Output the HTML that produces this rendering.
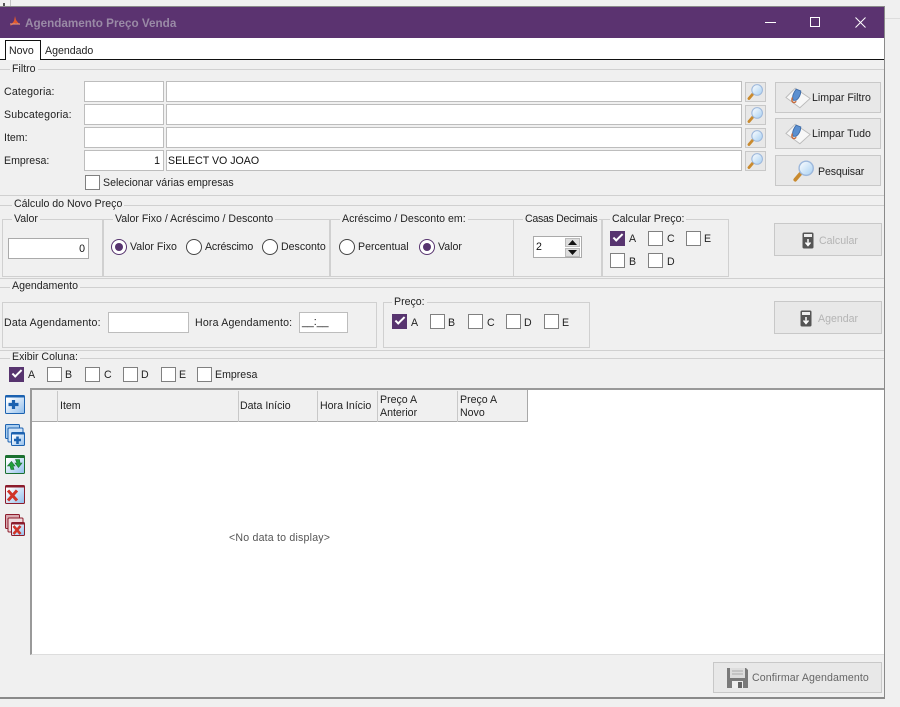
<!DOCTYPE html>
<html lang="pt"><head><meta charset="utf-8"><title>Agendamento Preço Venda</title>
<style>
html,body{margin:0;padding:0;width:900px;height:707px;overflow:hidden;background:#f0f0f0}
body{position:relative;font:10.6px "Liberation Sans",Arial,sans-serif;color:#222}
div,span,svg{position:absolute;box-sizing:border-box}
.t{white-space:nowrap;line-height:13px;margin-top:1px}
.g{background:#f0f0f0;padding:0 2px}
.i{background:#fff;border:1px solid #bdbdbd;line-height:20px;padding:0 3px;color:#111;white-space:nowrap}
.bx{border:1px solid #d0d0d0}
.hl{height:1px;background:#d0d0d0}
.b{background:#e8e8e8;border:1px solid #c8c8c8}
.c{width:15px;height:15px;background:#fff;border:1px solid #808080}
.c.on{background:#57346f;border-color:#57346f}
.c.on:after{content:"";position:absolute;left:2px;top:2px;width:8px;height:3px;border-left:2px solid #fff;border-bottom:2px solid #fff;transform:rotate(-45deg)}
.r{width:16px;height:16px;border-radius:50%;background:#fff;border:1px solid #444}
.r.on{border-color:#57346f}
.r.on:after{content:"";position:absolute;left:3px;top:3px;width:8px;height:8px;border-radius:50%;background:#57346f}
.h{top:1px;height:31px;border-right:1px solid #c8c8c8}
.h .t{left:3px}
.w{letter-spacing:.18px}
</style></head><body>
<svg width="0" height="0" style="left:0;top:0"><defs>
<linearGradient id="gl" x1="0" y1="0" x2="1" y2="1"><stop offset="0" stop-color="#fff"/><stop offset="1" stop-color="#a6cff2"/></linearGradient>
<symbol id="mag" viewBox="0 0 22 22"><path d="M3 19 9 12" stroke="#c98a2e" stroke-width="3.400" stroke-linecap="round"/><circle cx="13" cy="8.500" r="6.500" fill="url(#gl)" stroke="#9db8dc" stroke-width="1.300"/></symbol>
<symbol id="era" viewBox="0 0 28 24"><path d="M1 12 11 2 27 13 16 23Z" fill="#f7f7f7" stroke="#bbb"/><path d="M9 15C7 12 9 7 12 3L17 5C17 9 15 13 12 15Z" fill="#5b8fd0" stroke="#3f6ca8"/><path d="M8 12C6 17 10 19 12 16" fill="none" stroke="#c4693a" stroke-width="1.500"/></symbol>
<symbol id="usb" viewBox="0 0 12 17"><rect x="0.500" y="0.500" width="11" height="16" rx="1.500" fill="#555"/><rect x="2" y="2" width="8" height="3" fill="#eee"/><path d="M6 7V13M3.500 10.500 6 13.500 8.500 10.500" stroke="#fff" stroke-width="1.500" fill="none"/></symbol>
</defs></svg>

<!-- background hints -->
<div style="left:3px;top:3px;width:2px;height:3px;background:#555"></div>
<div style="left:10px;top:0;width:1px;height:6px;background:#c4c4c4"></div>
<div style="left:885px;top:18px;width:15px;height:1px;background:#ddd"></div>

<!-- window -->
<div style="left:0;top:6px;width:885px;height:693px;background:#f0f0f0;border:solid #8a8a8a;border-width:1px 1px 2px 0"></div>
<div style="left:0;top:7px;width:884px;height:31px;background:#5b3370"></div>
<svg style="left:9px;top:16px" width="12" height="11" viewBox="0 0 12 11"><path d="M6 0 7 4 11 9 7 7 1 10 5 5Z" fill="#e2592c"/><path d="M1 8H11" stroke="#f0a080" stroke-width="1"/></svg>
<div class="t" style="left:25px;top:16px;font-weight:bold;color:#9a8aa6;font-size:11.700px">Agendamento Preço Venda</div>
<div style="left:765px;top:22px;width:11px;height:1px;background:#fff"></div>
<div style="left:810px;top:17px;width:10px;height:10px;border:1px solid #fff"></div>
<svg style="left:855px;top:17px" width="11" height="11"><path d="M.5.500 10.500 10.500M10.500.500.500 10.500" stroke="#fff" fill="none"/></svg>

<!-- tabs -->
<div style="left:0;top:38px;width:884px;height:21px;background:#fff"></div>
<div style="left:0;top:59px;width:884px;height:1px;background:#111"></div>
<div style="left:5px;top:40px;width:36px;height:20px;background:#fff;border:1px solid #111;border-bottom:0"></div>
<div class="t" style="left:9px;top:44px">Novo</div>
<div class="t" style="left:45px;top:44px">Agendado</div>

<!-- Filtro -->
<div class="bx" style="left:0;top:69px;width:884px;height:127px;border-left:0;border-right:0"></div>
<div class="t g" style="left:10px;top:62px">Filtro</div>
<div class="t w" style="left:4px;top:85px">Categoria:</div>
<div class="t w" style="left:4px;top:108px">Subcategoria:</div>
<div class="t" style="left:4px;top:131px">Item:</div>
<div class="t" style="left:4px;top:154px">Empresa:</div>
<div class="i" style="left:84px;top:81px;width:80px;height:21px"></div>
<div class="i" style="left:166px;top:81px;width:576px;height:21px"></div>
<div class="i" style="left:84px;top:104px;width:80px;height:21px"></div>
<div class="i" style="left:166px;top:104px;width:576px;height:21px"></div>
<div class="i" style="left:84px;top:127px;width:80px;height:21px"></div>
<div class="i" style="left:166px;top:127px;width:576px;height:21px"></div>
<div class="i" style="left:84px;top:150px;width:80px;height:21px;text-align:right">1</div>
<div class="i" style="left:166px;top:150px;width:576px;height:21px;padding-left:1px">SELECT VO JOAO</div>
<div class="b" style="left:745px;top:82px;width:21px;height:20px"><svg style="left:0;top:0" width="19" height="18"><use href="#mag"/></svg></div>
<div class="b" style="left:745px;top:105px;width:21px;height:20px"><svg style="left:0;top:0" width="19" height="18"><use href="#mag"/></svg></div>
<div class="b" style="left:745px;top:128px;width:21px;height:20px"><svg style="left:0;top:0" width="19" height="18"><use href="#mag"/></svg></div>
<div class="b" style="left:745px;top:151px;width:21px;height:20px"><svg style="left:0;top:0" width="19" height="18"><use href="#mag"/></svg></div>
<div class="c" style="left:85px;top:175px"></div>
<div class="t" style="left:103px;top:176px">Selecionar várias empresas</div>
<div class="b" style="left:775px;top:82px;width:106px;height:31px"><svg style="left:9px;top:3px" width="26" height="23"><use href="#era"/></svg><div class="t" style="left:36px;top:8px">Limpar Filtro</div></div>
<div class="b" style="left:775px;top:118px;width:106px;height:31px"><svg style="left:9px;top:3px" width="26" height="23"><use href="#era"/></svg><div class="t" style="left:36px;top:8px">Limpar Tudo</div></div>
<div class="b" style="left:775px;top:155px;width:106px;height:31px"><svg style="left:16px;top:3px" width="24" height="24"><use href="#mag"/></svg><div class="t" style="left:42px;top:9px;letter-spacing:-.1px">Pesquisar</div></div>

<!-- Cálculo -->
<div class="bx" style="left:0;top:205px;width:884px;height:74px;border-left:0;border-right:0"></div>
<div class="t g" style="left:12px;top:197px">Cálculo do Novo Preço</div>
<div class="bx" style="left:2px;top:219px;width:101px;height:58px"></div>
<div class="t g" style="left:12px;top:212px">Valor</div>
<div class="i" style="left:8px;top:238px;width:81px;height:21px;text-align:right;border-color:#aaa">0</div>
<div class="bx" style="left:103px;top:219px;width:227px;height:58px"></div>
<div class="t g" style="left:113px;top:212px">Valor Fixo / Acréscimo / Desconto</div>
<div class="r on" style="left:111px;top:239px"></div>
<div class="t" style="left:130px;top:240px">Valor Fixo</div>
<div class="r" style="left:186px;top:239px"></div>
<div class="t" style="left:205px;top:240px;letter-spacing:-.15px">Acréscimo</div>
<div class="r" style="left:262px;top:239px"></div>
<div class="t" style="left:281px;top:240px">Desconto</div>
<div class="bx" style="left:330px;top:219px;width:184px;height:58px"></div>
<div class="t g" style="left:340px;top:212px">Acréscimo / Desconto em:</div>
<div class="r" style="left:339px;top:239px"></div>
<div class="t" style="left:358px;top:240px">Percentual</div>
<div class="r on" style="left:419px;top:239px"></div>
<div class="t" style="left:438px;top:240px">Valor</div>
<div class="bx" style="left:513px;top:219px;width:89px;height:58px"></div>
<div class="t g" style="left:523px;top:212px;letter-spacing:-.3px">Casas Decimais</div>
<div class="i" style="left:533px;top:236px;width:49px;height:22px;padding-left:2px;border-color:#aaa">2</div>
<div style="left:565px;top:238px;width:15px;height:9px;background:#ddd;border:1px solid #bbb"></div>
<div style="left:565px;top:248px;width:15px;height:9px;background:#ddd;border:1px solid #bbb"></div>
<svg style="left:565px;top:238px" width="15" height="19"><path d="M7.500 2 12 7H3ZM7.500 17 3 12H12Z" fill="#111"/></svg>
<div class="bx" style="left:602px;top:219px;width:127px;height:58px"></div>
<div class="t g" style="left:610px;top:212px">Calcular Preço:</div>
<div class="c on" style="left:610px;top:231px"></div><div class="t" style="left:629px;top:232px">A</div>
<div class="c" style="left:648px;top:231px"></div><div class="t" style="left:667px;top:232px">C</div>
<div class="c" style="left:686px;top:231px"></div><div class="t" style="left:704px;top:232px">E</div>
<div class="c" style="left:610px;top:253px"></div><div class="t" style="left:629px;top:255px">B</div>
<div class="c" style="left:648px;top:253px"></div><div class="t" style="left:667px;top:255px">D</div>
<div class="b" style="left:774px;top:223px;width:108px;height:33px"><svg style="left:27px;top:8px" width="12" height="17"><use href="#usb"/></svg><div class="t" style="left:44px;top:10px;color:#b4b4b4">Calcular</div></div>

<!-- Agendamento -->
<div class="bx" style="left:0;top:287px;width:884px;height:64px;border-left:0;border-right:0"></div>
<div class="t g" style="left:10px;top:279px">Agendamento</div>
<div class="bx" style="left:2px;top:302px;width:375px;height:46px"></div>
<div class="t w" style="left:4px;top:316px">Data Agendamento:</div>
<div class="i" style="left:108px;top:312px;width:81px;height:21px"></div>
<div class="t w" style="left:195px;top:316px">Hora Agendamento:</div>
<div class="i" style="left:299px;top:312px;width:49px;height:21px;line-height:18px;padding-left:2px;color:#111">__:__</div>
<div class="bx" style="left:383px;top:302px;width:207px;height:46px"></div>
<div class="t g" style="left:392px;top:295px">Preço:</div>
<div class="c on" style="left:392px;top:314px"></div><div class="t" style="left:411px;top:316px">A</div>
<div class="c" style="left:430px;top:314px"></div><div class="t" style="left:448px;top:316px">B</div>
<div class="c" style="left:468px;top:314px"></div><div class="t" style="left:487px;top:316px">C</div>
<div class="c" style="left:506px;top:314px"></div><div class="t" style="left:524px;top:316px">D</div>
<div class="c" style="left:544px;top:314px"></div><div class="t" style="left:562px;top:316px">E</div>
<div class="b" style="left:774px;top:301px;width:108px;height:33px"><svg style="left:25px;top:8px" width="12" height="17"><use href="#usb"/></svg><div class="t" style="left:43px;top:10px;color:#b4b4b4">Agendar</div></div>

<!-- Exibir Coluna -->
<div class="hl" style="left:0;top:358px;width:884px"></div>
<div class="t g" style="left:10px;top:350px">Exibir Coluna:</div>
<div class="c on" style="left:9px;top:367px"></div><div class="t" style="left:28px;top:368px">A</div>
<div class="c" style="left:47px;top:367px"></div><div class="t" style="left:65px;top:368px">B</div>
<div class="c" style="left:85px;top:367px"></div><div class="t" style="left:104px;top:368px">C</div>
<div class="c" style="left:123px;top:367px"></div><div class="t" style="left:141px;top:368px">D</div>
<div class="c" style="left:161px;top:367px"></div><div class="t" style="left:179px;top:368px">E</div>
<div class="c" style="left:197px;top:367px"></div><div class="t" style="left:215px;top:368px">Empresa</div>

<!-- side icons -->
<svg style="left:5px;top:395px" width="21" height="145" viewBox="0 0 21 145">
<defs><linearGradient id="w" x1="0" y1="0" x2="1" y2="1"><stop offset=".15" stop-color="#fff"/><stop offset="1" stop-color="#8fbdec"/></linearGradient></defs>
<rect x=".5" y=".5" width="19" height="18" rx="1" fill="url(#w)" stroke="#1c62b0"/><rect x=".5" y=".5" width="19" height="2" fill="#1c62b0"/><path d="M3.500 9.500H13.500M8.500 5V14" stroke="#1c62b0" stroke-width="3.200"/>
<rect x=".5" y="29.500" width="14" height="14" rx="1" fill="#a8cdf0" stroke="#1c62b0"/><rect x="3" y="33" width="15" height="14" rx="1" fill="#cfe3f7" stroke="#1c62b0"/><rect x="6.500" y="37.500" width="13" height="13" rx="1" fill="url(#w)" stroke="#1c62b0"/><rect x="6.500" y="37.500" width="13" height="2" fill="#1c62b0"/><path d="M9 45H16M12.500 41.500V49" stroke="#1c62b0" stroke-width="2.600"/>
<rect x=".5" y="60.500" width="19" height="18" rx="1" fill="url(#w)" stroke="#1b7030"/><rect x=".5" y="60.500" width="19" height="2.500" fill="#1b7030"/><path d="M2.500 71 6.500 66.500 10 71H8L9 74.500H6L5 71ZM10.500 64.500H14.500L15 68H17L13.500 72.500 10 68H12Z" fill="#21a03a" stroke="#1b7030" stroke-width=".6"/>
<rect x=".5" y="90.500" width="19" height="18" rx="1" fill="url(#w)" stroke="#8c1c2c"/><rect x=".5" y="90.500" width="19" height="2" fill="#8c1c2c"/><path d="M3 95.500 12 105.500M12 95.500 3 105.500" stroke="#d03428" stroke-width="3"/>
<rect x=".5" y="119.500" width="14" height="14" rx="1" fill="#d9a9b0" stroke="#8c1c2c"/><rect x="3" y="123" width="15" height="14" rx="1" fill="#efdadd" stroke="#8c1c2c"/><rect x="6.500" y="127.500" width="13" height="13" rx="1" fill="url(#w)" stroke="#8c1c2c"/><rect x="6.500" y="127.500" width="13" height="2" fill="#8c1c2c"/><path d="M8.500 131 15.500 139M15.500 131 8.500 139" stroke="#d03428" stroke-width="2.600"/>
</svg>

<!-- grid -->
<div style="left:30px;top:388px;width:854px;height:267px;background:#fff;border-top:2px solid #999;border-left:2px solid #999;border-bottom:1px solid #ddd"></div>
<div style="left:32px;top:390px;width:496px;height:32px;background:#f0f0f0;border-bottom:1px solid #a8a8a8;border-right:1px solid #a8a8a8"></div>
<div style="left:33px;top:390px;width:495px;height:31px">
<div class="h" style="left:0;width:25px"></div>
<div class="h" style="left:25px;width:181px"><div class="t" style="top:8px;left:2px">Item</div></div>
<div class="h" style="left:206px;width:79px;"><div class="t" style="top:8px;left:1px">Data Início</div></div>
<div class="h" style="left:285px;width:60px"><div class="t" style="top:8px;left:2px">Hora Início</div></div>
<div class="h" style="left:345px;width:80px"><div class="t" style="top:2px;left:2px">Preço A</div><div class="t" style="top:15px;left:2px">Anterior</div></div>
<div class="h" style="left:425px;width:70px;border-right:0"><div class="t" style="top:2px;left:2px">Preço A</div><div class="t" style="top:15px;left:2px">Novo</div></div>
</div>
<div class="t" style="left:229px;top:531px;color:#555;letter-spacing:.2px">&lt;No data to display&gt;</div>

<!-- footer -->
<div class="b" style="left:713px;top:662px;width:169px;height:31px">
<svg style="left:13px;top:4px" width="22" height="22" viewBox="0 0 22 22"><path d="M0 1H19L21 3V21H0Z" fill="#7a7a7a"/><rect x="3" y="1" width="15" height="10" fill="#ddd"/><path d="M5 4H16M5 7H16" stroke="#aaa"/><rect x="5" y="14" width="11" height="7" fill="#eee"/><rect x="11" y="15" width="4" height="6" fill="#666"/></svg>
<div class="t" style="left:38px;top:8px;color:#666;letter-spacing:.1px">Confirmar Agendamento</div></div>
</body></html>
